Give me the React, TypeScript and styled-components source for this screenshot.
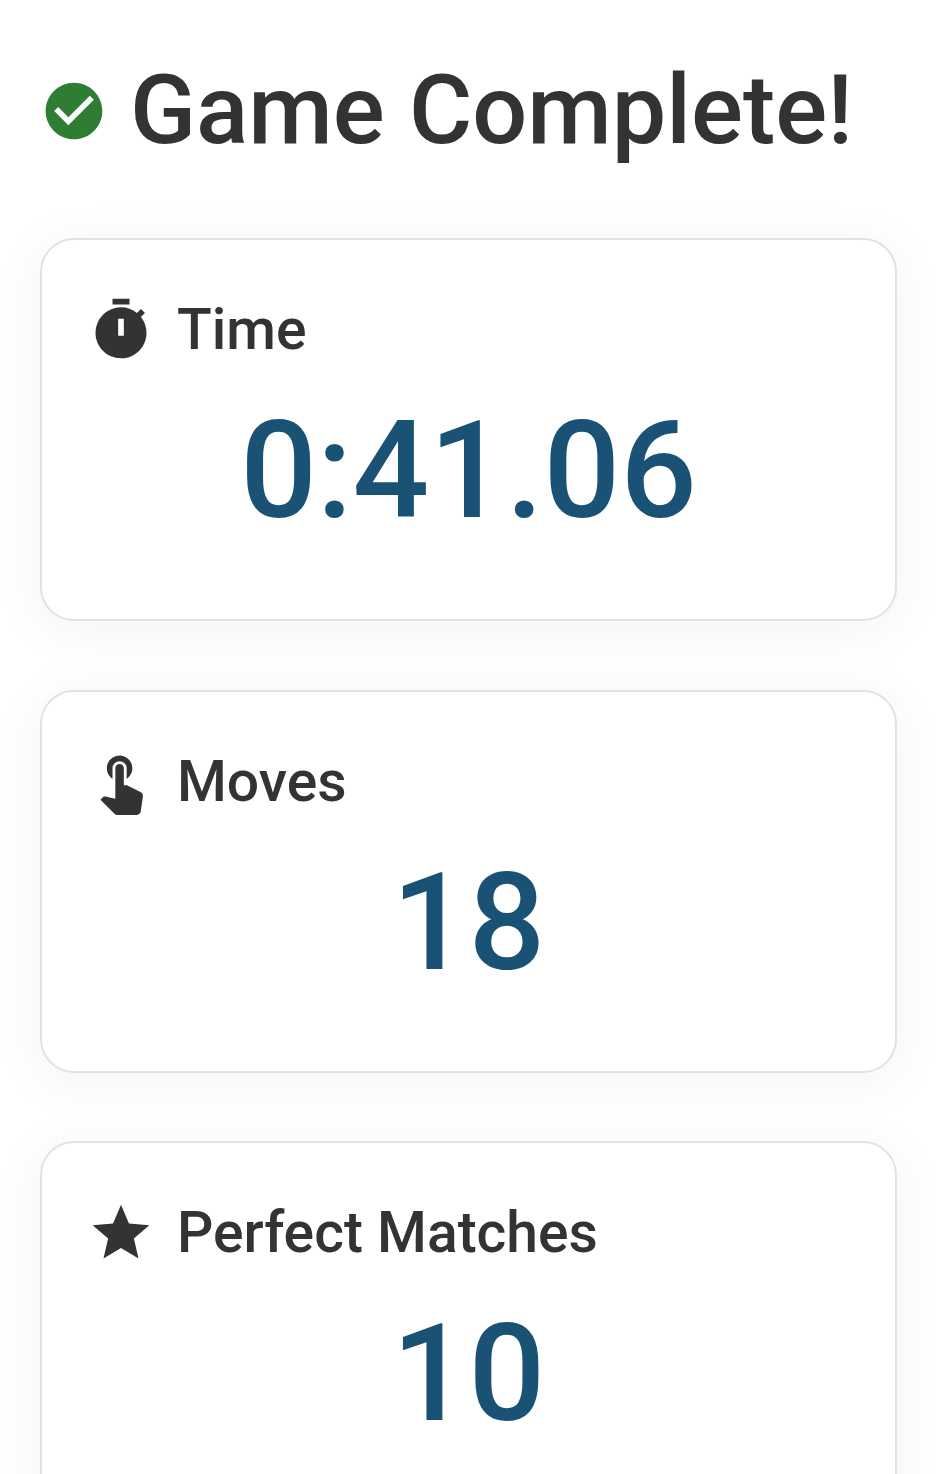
import React from 'react';
import styled, { createGlobalStyle } from 'styled-components';
import { MdCheckCircle, MdStar, MdTimer, MdTouchApp } from 'react-icons/md';

const GlobalStyle = createGlobalStyle`
  html, body {
    margin: 0;
    padding: 0;
    height: 100%;
    overflow: hidden;
    background: #ffffff;
  }
`;

const Page = styled.div`
  width: 945px;
  height: 1474px;
  overflow: hidden;
  box-sizing: border-box;
  padding: 55px 48px 0 40px;
  font-family: Roboto, "Liberation Sans", sans-serif;
  color: #333333;
`;

const Header = styled.h1`
  display: flex;
  align-items: center;
  gap: 22px;
  margin: 0 0 72px 0;
  height: 111px;
  font-size: 97px;
  font-weight: 500;
  line-height: 111px;
  white-space: nowrap;
  color: #333333;
`;

const HeaderIcon = styled(MdCheckCircle)`
  width: 68px;
  height: 68px;
  flex: none;
  color: #2e7d32;
`;

const Cards = styled.div`
  display: flex;
  flex-direction: column;
  gap: 68.6px;
`;

const Card = styled.section`
  box-sizing: border-box;
  height: 383px;
  padding: 56px 45px 0;
  background: #ffffff;
  border: 2px solid #e2e2e2;
  border-radius: 34px;
  box-shadow: 0 8px 56px rgba(0, 0, 0, 0.05);
`;

const CardHeader = styled.div`
  display: flex;
  align-items: center;
  gap: 22px;
  height: 68px;
  font-size: 57px;
  font-weight: 500;
  line-height: 68px;
  color: #333333;
  svg {
    width: 68px;
    height: 68px;
    margin-top: -1px;
    flex: none;
  }
`;

const Value = styled.div`
  margin-top: 29px;
  text-align: center;
  font-size: 135px;
  font-weight: 500;
  line-height: 157px;
  color: #1a5276;
`;

const stats = [
  { icon: <MdTimer />, label: 'Time', value: '0:41.06' },
  { icon: <MdTouchApp />, label: 'Moves', value: '18' },
  { icon: <MdStar />, label: 'Perfect Matches', value: '10' },
];

const App: React.FC = () => {
  return (
    <>
      <GlobalStyle />
      <Page>
        <Header>
          <HeaderIcon />
          Game Complete!
        </Header>
        <Cards>
          {stats.map((stat) => (
            <Card key={stat.label}>
              <CardHeader>
                {stat.icon}
                {stat.label}
              </CardHeader>
              <Value>{stat.value}</Value>
            </Card>
          ))}
        </Cards>
      </Page>
    </>
  );
};

export default App;
